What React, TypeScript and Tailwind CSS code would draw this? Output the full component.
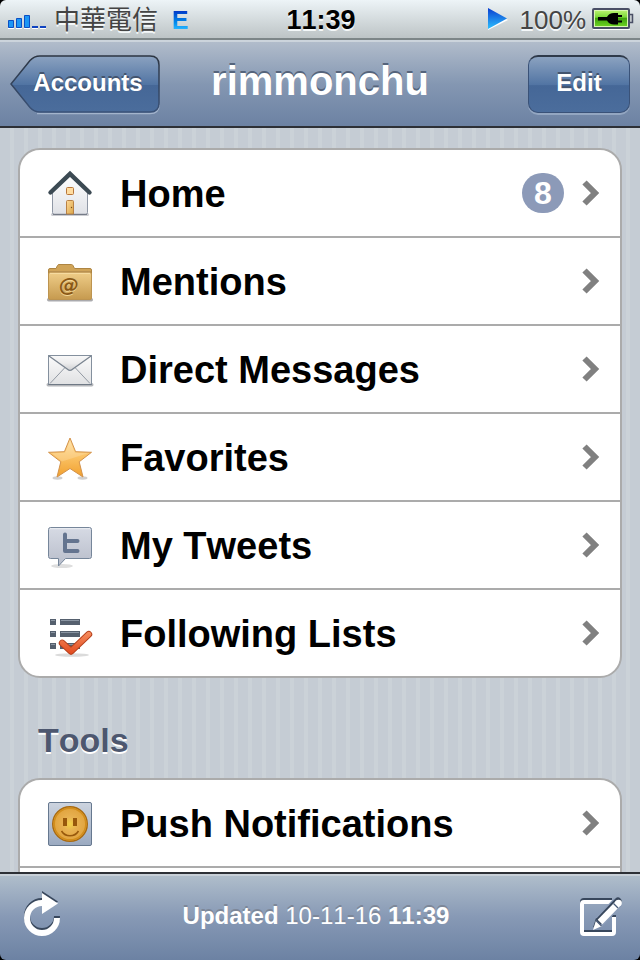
import type { ReactNode } from "react";

function HomeIcon() {
  return (
    <svg width="48" height="48" viewBox="0 0 48 48" aria-hidden="true">
      <defs>
        <linearGradient id="homeWall" x1="0" y1="0" x2="0" y2="1">
          <stop offset="0" stopColor="#ffffff" />
          <stop offset="1" stopColor="#dfe1e6" />
        </linearGradient>
        <linearGradient id="homeDoor" x1="0" y1="0" x2="1" y2="1">
          <stop offset="0" stopColor="#ffd998" />
          <stop offset="1" stopColor="#d9a548" />
        </linearGradient>
      </defs>
      <rect x="5" y="44" width="38" height="3" rx="1.5" fill="#9a9ca6" opacity="0.5" />
      <path d="M24 6 L41.5 22 V43.5 Q41.5 45.5 39.5 45.5 H8.5 Q6.5 45.5 6.5 43.5 V22 Z" fill="url(#homeWall)" stroke="#8f97a5" />
      <path d="M7 45.3 H41" stroke="#6f7580" />
      <path d="M4.5 23.5 L24 4.8 L43.5 23.5" fill="none" stroke="#3c4a53" strokeWidth="4.4" strokeLinecap="round" />
      <rect x="20.5" y="18.5" width="7" height="7" rx="1" fill="#ffdca0" stroke="#b8763a" />
      <path d="M20.5 45 V32.5 Q20.5 31.5 21.5 31.5 H26.5 Q27.5 31.5 27.5 32.5 V45 Z" fill="url(#homeDoor)" stroke="#b98145" />
      <circle cx="25.5" cy="38.5" r="0.7" fill="#7a4c18" />
    </svg>
  );
}

function MentionsIcon() {
  return (
    <svg width="48" height="48" viewBox="0 0 48 48" aria-hidden="true">
      <defs>
        <linearGradient id="folderFront" x1="0" y1="0" x2="0" y2="1">
          <stop offset="0" stopColor="#efcd88" />
          <stop offset="1" stopColor="#c69a4f" />
        </linearGradient>
      </defs>
      <rect x="1" y="41" width="46" height="3.5" rx="1.7" fill="#55555c" opacity="0.5" />
      <path d="M2.5 40 V13 Q2.5 11.5 4 11.5 H10 L11.5 8.5 Q12 7.5 13 7.5 H25.5 Q26.5 7.5 27 8.5 L28.5 11.5 H44 Q45.5 11.5 45.5 13 V40 Z" fill="#d0a458" stroke="#ae8542" />
      <path d="M3 14.5 H45" stroke="#b99150" />
      <rect x="2.5" y="15.5" width="43" height="27" rx="1.5" fill="url(#folderFront)" stroke="#bd9450" />
      <path d="M4 16.3 H44" stroke="#f8dfa6" />
      <g className="font-['DejaVu_Sans'] text-[20px] font-bold italic" textAnchor="middle">
        <text x="23" y="36" fill="#f5d999">@</text>
        <text x="23" y="35" fill="#8a5816">@</text>
      </g>
    </svg>
  );
}

function MessagesIcon() {
  return (
    <svg width="48" height="48" viewBox="0 0 48 48" aria-hidden="true">
      <defs>
        <linearGradient id="mailBody" x1="0" y1="0" x2="0" y2="1">
          <stop offset="0" stopColor="#fbfbfb" />
          <stop offset="1" stopColor="#e0e1e3" />
        </linearGradient>
        <linearGradient id="mailFlap" x1="0" y1="0" x2="0" y2="1">
          <stop offset="0" stopColor="#f8f8f8" />
          <stop offset="0.5" stopColor="#ececed" />
          <stop offset="1" stopColor="#cfd0d2" />
        </linearGradient>
      </defs>
      <rect x="0.5" y="38" width="47" height="3.5" rx="1.7" fill="#6a6d75" opacity="0.5" />
      <rect x="2.5" y="10.5" width="43" height="29" fill="url(#mailBody)" stroke="#84909e" />
      <path d="M4 38.5 L19 22.5 M44 38.5 L29 22.5" stroke="#9299a3" />
      <path d="M3 11 L21.5 24.2 Q24 26.5 26.5 24.2 L45 11 Z" fill="url(#mailFlap)" />
      <path d="M3 11 L21.5 24.2 Q24 26.5 26.5 24.2 L45 11" fill="none" stroke="#7b8591" strokeWidth="1.3" />
      <path d="M2.5 39.5 H45.5" stroke="#6f7985" />
    </svg>
  );
}

function FavoritesIcon() {
  return (
    <svg width="48" height="48" viewBox="0 0 48 48" aria-hidden="true">
      <defs>
        <linearGradient id="starFill" x1="0" y1="0" x2="0" y2="1">
          <stop offset="0" stopColor="#ffdf9d" />
          <stop offset="0.45" stopColor="#fbc468" />
          <stop offset="1" stopColor="#f1a02e" />
        </linearGradient>
      </defs>
      <ellipse cx="11.5" cy="45" rx="5" ry="1.7" fill="#777" opacity="0.35" />
      <ellipse cx="36.5" cy="45" rx="5" ry="1.7" fill="#777" opacity="0.35" />
      <path
        d="M24 5 L29.6 18.7 L45.5 19.3 L33.2 28.8 L37 44 L24 35.5 L11 44 L14.8 28.8 L2.5 19.3 L18.4 18.7 Z"
        fill="url(#starFill)"
        stroke="#d3924a"
        strokeLinejoin="round"
      />
      <path d="M24 8 L28.8 19.8 L42 20.3 Q30 24 16 28.5 L6 20.3 L19.2 19.8 Z" fill="#fff" opacity="0.18" />
    </svg>
  );
}

function TweetsIcon() {
  return (
    <svg width="48" height="48" viewBox="0 0 48 48" aria-hidden="true">
      <defs>
        <linearGradient id="bubbleFill" x1="0" y1="0" x2="0" y2="1">
          <stop offset="0" stopColor="#d6dae4" />
          <stop offset="1" stopColor="#b8bdca" />
        </linearGradient>
      </defs>
      <ellipse cx="16" cy="45" rx="11" ry="2" fill="#888" opacity="0.28" />
      <path
        d="M4.5 6.5 H43.5 Q45.5 6.5 45.5 8.5 V35.5 Q45.5 37.5 43.5 37.5 H19.5 L12.5 45 V37.5 H4.5 Q2.5 37.5 2.5 35.5 V8.5 Q2.5 6.5 4.5 6.5 Z"
        fill="url(#bubbleFill)"
        stroke="#76869a"
      />
      <path d="M4 7.7 H44" stroke="#eceef3" />
      <path d="M19 13.5 V30 H31.5 M19 20 H31.5" fill="none" stroke="#64748f" strokeWidth="4" strokeLinecap="round" strokeLinejoin="round" />
    </svg>
  );
}

function ListsIcon() {
  return (
    <svg width="48" height="48" viewBox="0 0 48 48" aria-hidden="true">
      <defs>
        <linearGradient id="checkFill" x1="0" y1="24" x2="0" y2="45" gradientUnits="userSpaceOnUse">
          <stop offset="0" stopColor="#f58a5c" />
          <stop offset="1" stopColor="#e14a1e" />
        </linearGradient>
      </defs>
      {[10, 22, 34].map((y) => (
        <g key={y}>
          <rect x="4" y={y} width="6" height="6" fill="#55606e" />
          <rect x="14" y={y} width="20" height="6" fill="#55606e" />
          <path d={`M5 ${y + 1.5} H9 M15 ${y + 1.5} H33`} stroke="#8a95a2" />
        </g>
      ))}
      <ellipse cx="26" cy="46" rx="17" ry="1.8" fill="#888" opacity="0.3" />
      <path d="M16.2 34 L25 42.3 L42.8 25.3" fill="none" stroke="#b5401c" strokeWidth="6.8" strokeLinecap="round" strokeLinejoin="round" />
      <path d="M16.2 34 L25 42.3 L42.8 25.3" fill="none" stroke="url(#checkFill)" strokeWidth="5" strokeLinecap="round" strokeLinejoin="round" />
    </svg>
  );
}

function PushIcon() {
  return (
    <svg width="48" height="48" viewBox="0 0 48 48" aria-hidden="true">
      <defs>
        <linearGradient id="tile" x1="0" y1="0" x2="0" y2="1">
          <stop offset="0" stopColor="#cdd4df" />
          <stop offset="1" stopColor="#9aa9c0" />
        </linearGradient>
        <radialGradient id="coin">
          <stop offset="0" stopColor="#f3d348" />
          <stop offset="0.4" stopColor="#e8b252" />
          <stop offset="1" stopColor="#e0a23c" />
        </radialGradient>
      </defs>
      <rect x="2.5" y="3.5" width="43" height="43" rx="1.5" fill="url(#tile)" stroke="#66788f" />
      <circle cx="24" cy="25" r="17.3" fill="url(#coin)" stroke="#a86a12" strokeWidth="1.4" />
      <circle cx="24" cy="25" r="15.8" fill="none" stroke="#d28e1c" strokeWidth="1.5" />
      <path d="M17 19 H21 V27 H17 Z M27 19 H31 V27 H27 Z" fill="#98590c" />
      <path d="M15.5 32 Q18.5 36.8 24 36.8 Q29.5 36.8 32.5 32" fill="none" stroke="#98590c" strokeWidth="1.6" />
    </svg>
  );
}

function Chevron() {
  return (
    <svg width="18" height="26" viewBox="0 0 18 26" aria-hidden="true">
      <path d="M2.5 2.5 L13 13 L2.5 23.5" fill="none" stroke="#808080" strokeWidth="6" />
    </svg>
  );
}

type Row = { label: string; icon: ReactNode; count?: number };

const timelineRows: Row[] = [
  { label: "Home", icon: <HomeIcon />, count: 8 },
  { label: "Mentions", icon: <MentionsIcon /> },
  { label: "Direct Messages", icon: <MessagesIcon /> },
  { label: "Favorites", icon: <FavoritesIcon /> },
  { label: "My Tweets", icon: <TweetsIcon /> },
  { label: "Following Lists", icon: <ListsIcon /> },
];

const toolRows: Row[] = [{ label: "Push Notifications", icon: <PushIcon /> }];

function RowList({ rows, children }: { rows: Row[]; children?: ReactNode }) {
  return (
    <ul className="overflow-hidden rounded-[22px] border-2 border-[#ababab] bg-white">
      {rows.map((row) => (
        <li key={row.label} className="border-b-2 border-[#ababab] last:border-b-0">
          <a href="#" className="flex h-[86px] items-center pr-5 pl-[26px] text-black">
            <span className="w-12 shrink-0">{row.icon}</span>
            <span className="ml-[26px] flex-1 truncate pt-0.5 text-[38px] leading-[48px] font-bold">{row.label}</span>
            {row.count && (
              <span className="mr-[18px] grid h-10 w-[42px] place-items-center rounded-full bg-[#8c9ab8] text-[32px] leading-10 font-bold text-white">
                {row.count}
              </span>
            )}
            <Chevron />
          </a>
        </li>
      ))}
      {children}
    </ul>
  );
}

function StatusBar() {
  return (
    <div className="grid h-10 shrink-0 grid-cols-[1fr_auto_1fr] items-center rounded-t-md border-b-2 border-[#7d8688] bg-linear-to-b from-[#edf4f7] to-[#bdc4c6] pr-1.5 pl-2">
      <div className="flex items-center pt-0.5">
        <svg className="mt-1" width="38" height="14" viewBox="0 0 38 14" role="img" aria-label="Signal">
          <path d="M0.5 5.5 H5.5 V12.5 H0.5 Z M8.5 3.5 H13.5 V12.5 H8.5 Z M16.5 0.5 H21.5 V12.5 H16.5 Z" fill="#1c96f5" stroke="#0b4fc4" />
          <path d="M24 11 H30 V13 H24 Z M32 11 H38 V13 H32 Z" fill="#1043c0" />
          <path d="M0 13.5 H6 M8 13.5 H14 M16 13.5 H22 M24 13.5 H30 M32 13.5 H38" stroke="#fff" />
        </svg>
        <span className="ml-2 text-[26px] leading-9 text-[#444] [text-shadow:0_2px_0_#f4f8f9]">中華電信</span>
        <span className="ml-3.5 bg-linear-to-b from-[#0538c8] from-25% to-[#25b4ff] to-75% bg-clip-text text-[25px] leading-9 font-bold text-transparent">E</span>
      </div>
      <time className="pt-0.5 text-[27px] leading-9 font-bold text-black [text-shadow:0_2px_0_#f4f8f9]">11:39</time>
      <div className="flex items-center justify-end">
        <svg width="20" height="22" viewBox="0 0 20 22" aria-hidden="true">
          <defs>
            <linearGradient id="play" x1="0" y1="0" x2="0" y2="1">
              <stop offset="0" stopColor="#0a3ed0" />
              <stop offset="1" stopColor="#2cc0ff" />
            </linearGradient>
          </defs>
          <path d="M0 2 L20 12 L0 22 Z" fill="#fff" />
          <path d="M0 0 L19 10.5 L0 21 Z" fill="url(#play)" />
        </svg>
        <span className="ml-3 pt-0.5 text-[26px] leading-9 text-[#444] [text-shadow:0_2px_0_#f4f8f9]">100%</span>
        <svg className="ml-1.5" width="42" height="22" viewBox="0 0 42 22" role="img" aria-label="Charging">
          <defs>
            <linearGradient id="battery" x1="0" y1="0" x2="0" y2="1">
              <stop offset="0" stopColor="#b4f06a" />
              <stop offset="0.4" stopColor="#7cd83a" />
              <stop offset="0.5" stopColor="#3fa30c" />
              <stop offset="1" stopColor="#6ad022" />
            </linearGradient>
          </defs>
          <path d="M1 21.5 H38" stroke="#fff" />
          <rect x="1" y="1" width="36" height="19" rx="1" fill="#d9f8b0" stroke="#4a4f66" strokeWidth="2" />
          <rect x="3" y="3" width="32" height="15" fill="url(#battery)" />
          <path d="M38 6.5 H40.5 V14.5 H38" fill="#c4cacd" stroke="#4a4f66" strokeWidth="1.5" />
          <path d="M6 9 H15 Q17 5 22 5 H26 V7 H30 V9 H26 V12.5 H30 V14.5 H26 V16.5 H22 Q17 16.5 15 12.5 H6 Z" fill="#000" />
        </svg>
      </div>
    </div>
  );
}

function NavBar() {
  return (
    <header className="grid h-[88px] shrink-0 grid-cols-[1fr_auto_1fr] items-center border-t-2 border-b-2 border-t-[#ccd4dc] border-b-[#2d3036] bg-linear-to-b from-[#b1bccb] via-[#8497b2] to-[#6c82a3] px-2.5">
      <button type="button" className="relative h-[58px] w-[150px] justify-self-start pb-0.5 pl-1.5 text-2xl leading-7 font-bold text-white [text-shadow:0_-2px_0_#43546e]">
        <svg className="absolute inset-0" width="150" height="60" viewBox="0 0 150 60" aria-hidden="true">
          <defs>
            <linearGradient id="backFill" x1="0" y1="0" x2="0" y2="1">
              <stop offset="0" stopColor="#8ba2c0" />
              <stop offset="0.51" stopColor="#5174a3" />
              <stop offset="0.52" stopColor="#456797" />
              <stop offset="1" stopColor="#4b6d9c" />
            </linearGradient>
            <linearGradient id="backEdge" x1="0" y1="0" x2="0" y2="1">
              <stop offset="0" stopColor="#2c3542" />
              <stop offset="1" stopColor="#3a5278" />
            </linearGradient>
          </defs>
          <path d="M27 58.5 H140 Q149 58.5 149 50" fill="none" stroke="#a3b4cc" strokeWidth="1.5" />
          <path
            d="M1 29 L20 5.5 Q24 1 30 1 H140 Q149 1 149 10 V48 Q149 57 140 57 H30 Q24 57 20 52.5 Z"
            fill="url(#backFill)"
            stroke="url(#backEdge)"
            strokeWidth="1.5"
          />
        </svg>
        <span className="relative">Accounts</span>
      </button>
      <h1 className="pb-1.5 text-[40px] leading-[48px] font-bold text-white [text-shadow:0_-2px_0_#55647b]">rimmonchu</h1>
      <button
        type="button"
        className="h-[58px] w-[102px] justify-self-end rounded-[10px] border border-t-2 border-[#3a5278] border-t-[#2f3a4a] bg-[linear-gradient(#8ba2c0,#5174a3_51%,#456797_52%,#4b6d9c)] pb-1 text-2xl leading-7 font-bold text-white shadow-[0_2px_0_#93a6c1] [text-shadow:0_-2px_0_#43546e]"
      >
        Edit
      </button>
    </header>
  );
}

function RefreshIcon() {
  return (
    <svg width="40" height="52" viewBox="0 0 40 52" aria-hidden="true">
      {["#38475c", "#ffffff"].map((color, i) => (
        <g key={color} transform={`translate(0 ${i * 2 - 2})`}>
          <path d="M35 27 A15 15 0 1 1 20 12" fill="none" stroke={color} strokeWidth="6" />
          <path d="M20 2 L36 12.5 L20 23 Z" fill={color} />
        </g>
      ))}
    </svg>
  );
}

function ComposeIcon() {
  return (
    <svg width="44" height="52" viewBox="0 0 44 52" aria-hidden="true">
      {["#38475c", "#ffffff"].map((color, i) => (
        <path
          key={color}
          transform={`translate(0 ${i * 2 - 2})`}
          d="M34 11 H6 Q4 11 4 13 V41 Q4 43 6 43 H34 Q36 43 36 41 V26"
          fill="none"
          stroke={color}
          strokeWidth="4"
        />
      ))}
      <path d="M20 32 L40 11" stroke="#8c9db8" strokeWidth="11" />
      <path d="M15 36.5 L18 27 L24 32 Z" fill="#38475c" />
      <path d="M21 30 L40 10" stroke="#38475c" strokeWidth="7" strokeLinecap="round" />
      <path d="M15 39 L18 29.5 L24 35 Z" fill="#fff" />
      <path d="M22 31 L40.5 12" stroke="#fff" strokeWidth="6.5" />
      <circle cx="40.5" cy="12" r="3.3" fill="#fff" />
      <path d="M35.5 12.5 L40 17 M18 29.5 L23.5 35" stroke="#4b5d78" strokeWidth="1.3" />
    </svg>
  );
}

function Toolbar() {
  return (
    <footer className="flex h-[88px] shrink-0 items-center justify-between rounded-b-md border-t-2 border-[#2d3036] bg-linear-to-b from-[#b1bfcc] via-[#8799b5] to-[#6c82a3] px-[18px] shadow-[inset_0_2px_0_#c8d0d8]">
      <button type="button" aria-label="Refresh" className="flex w-12 justify-center">
        <RefreshIcon />
      </button>
      <p className="pb-0.5 text-2xl font-bold text-white [text-shadow:0_-2px_0_#7d8798]">
        Updated <span className="font-normal">10-11-16</span> 11:39
      </p>
      <button type="button" aria-label="Compose" className="flex w-14 justify-end">
        <ComposeIcon />
      </button>
    </footer>
  );
}

export default function App() {
  return (
    <div className="flex h-screen flex-col overflow-hidden bg-black font-['Liberation_Sans','Noto_Sans_CJK_TC',sans-serif] [font-kerning:none]">
      <StatusBar />
      <NavBar />
      <main className="min-h-0 flex-1 overflow-hidden bg-[repeating-linear-gradient(90deg,#c5ccd4_0_10px,#cbd2d8_10px_14px)] px-[18px] pt-5">
        <RowList rows={timelineRows} />
        <h2 className="mt-[38px] mb-3.5 px-5 text-[34px] leading-[48px] font-bold text-[#4d576f] [text-shadow:0_2px_0_#fff]">Tools</h2>
        <RowList rows={toolRows}>
          <li className="h-[86px]" />
        </RowList>
      </main>
      <Toolbar />
    </div>
  );
}
